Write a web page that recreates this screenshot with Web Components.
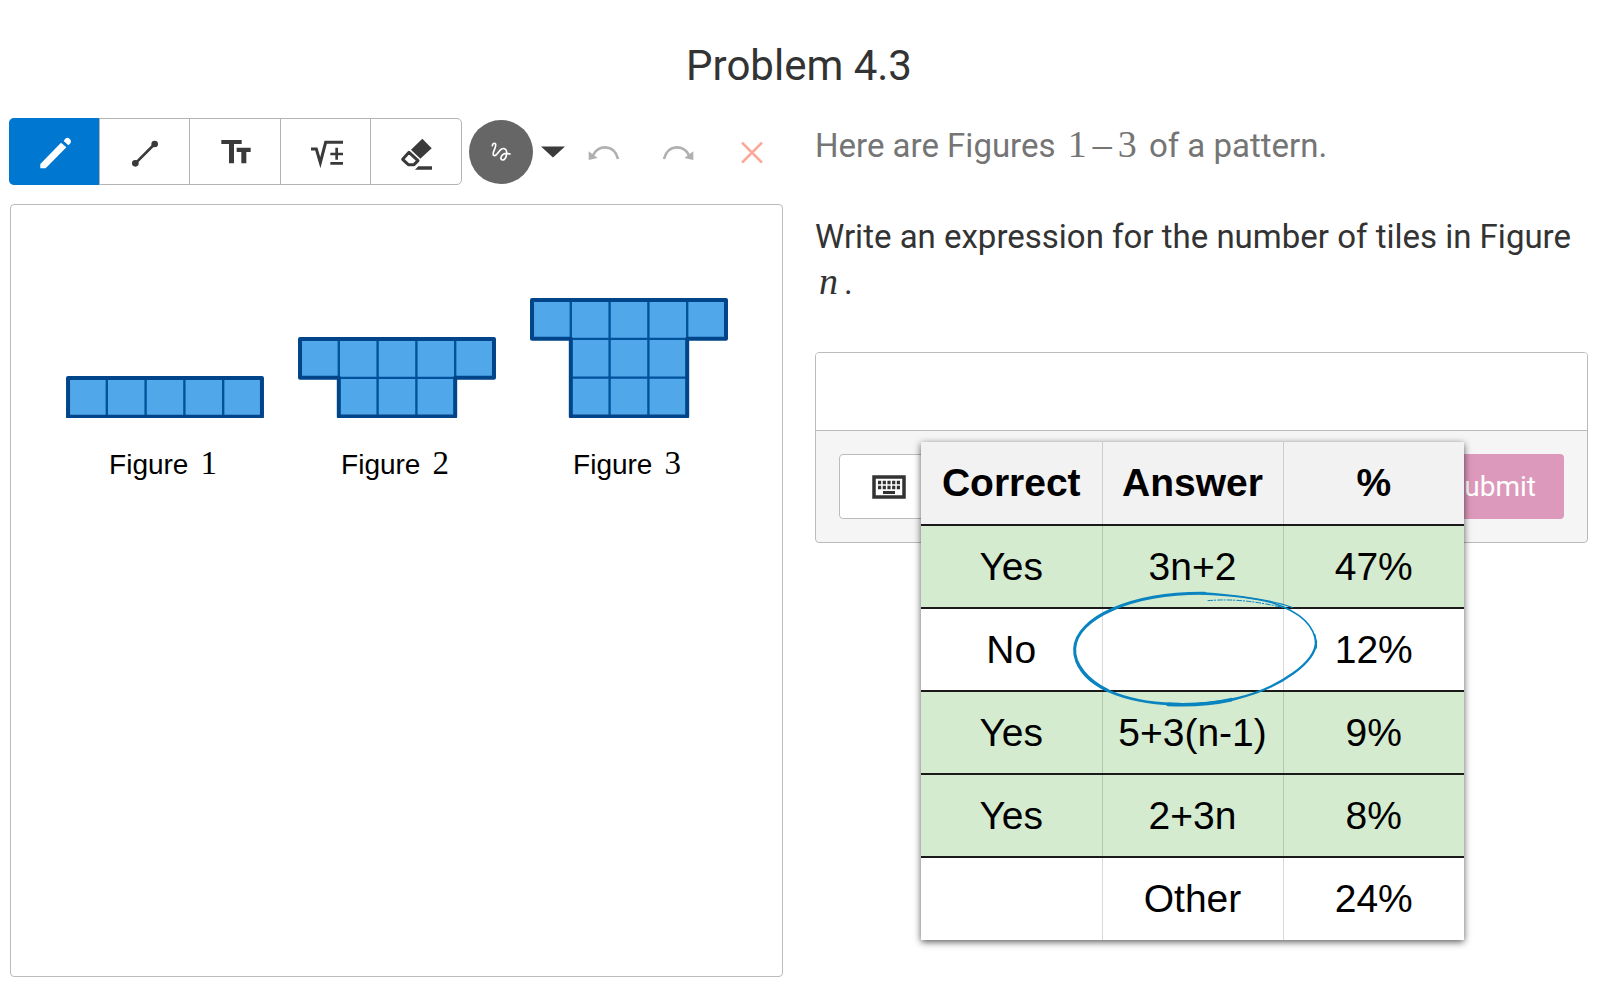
<!DOCTYPE html>
<html lang="en">
<head>
<meta charset="utf-8">
<title>Problem 4.3</title>
<style>
  body { margin: 0; background: #fff; color: #333; font-family: Roboto, "Liberation Sans", sans-serif; }
</style>
</head>
<body>
<problem-page>
  <span slot="title">Problem 4.3</span>
  <sketch-toolbar slot="work"></sketch-toolbar>
  <sketch-board slot="work">
    <tile-figure rows="1">1</tile-figure>
    <tile-figure rows="2">2</tile-figure>
    <tile-figure rows="3">3</tile-figure>
  </sketch-board>
  <problem-prompt slot="question"></problem-prompt>
  <answer-box slot="question">
    <answer-summary></answer-summary>
  </answer-box>
</problem-page>

<script>
const define = (name, html, setup) => {
  const template = document.createElement('template');
  template.innerHTML = html;
  customElements.define(name, class extends HTMLElement {
    constructor() {
      super();
      this.attachShadow({ mode: 'open' }).append(template.content.cloneNode(true));
    }
    connectedCallback() { if (setup) setup(this, this.shadowRoot); }
  });
};

define('problem-page', `
<style>
  :host { display: block; padding: 36px 12px 12px 10px; }
  h1 { margin: 0 0 22px; font-size: 42px; line-height: 60px; font-weight: 400; text-align: center; }
  main { display: grid; grid-template-columns: minmax(0, 1fr) minmax(0, 1fr); gap: 32px; align-items: start; }
</style>
<h1><slot name="title"></slot></h1>
<main>
  <section aria-label="Sketch"><slot name="work"></slot></section>
  <section aria-label="Question"><slot name="question"></slot></section>
</main>`);

define('sketch-toolbar', `
<style>
  :host { display: flex; align-items: center; height: 67px; margin: 0 0 19px -1px; color: #3a3a3a; }
  button { display: flex; align-items: center; justify-content: center; padding: 0; border: 0; background: none; color: inherit; cursor: pointer; }
  svg { display: block; width: 40px; height: 40px; fill: currentColor; }
  .stroke { fill: none; stroke: currentColor; }
  .tools { display: flex; box-sizing: border-box; width: 453px; height: 67px; border: 1px solid #b4b4b4; border-radius: 5px; }
  .tools button { flex: 1; }
  .tools button + button { border-left: 1px solid #b4b4b4; }
  .tools button[aria-pressed=true] { background: #0077d0; color: #fff; margin: -1px 0 -1px -1px; border-radius: 5px 0 0 5px; }
  .brush { width: 64px; height: 64px; margin-left: 7px; border-radius: 50%; background: #666; color: #fff; }
  .menu { width: 24px; margin: 0 8px; }
  .menu svg { width: 26px; height: 14px; }
  .actions { flex: 1; display: flex; justify-content: space-between; padding: 0 11px 0 11px; color: #b0b0b0; }
  .clear { color: #fca898; }
</style>
<div class="tools" role="group" aria-label="Tools">
  <button aria-label="Pencil" aria-pressed="true"><svg viewBox="-60 -60 120 120"><path d="M-41 49V36L21-28 37-14-25 49Z"/><path d="M29-33Q38-49 48-38 56-30 43-20Z"/></svg></button>
  <button aria-label="Line"><svg viewBox="-60 -60 120 120"><circle cx="-26" cy="34" r="10"/><circle cx="32" cy="-24" r="10"/><path class="stroke" stroke-width="8" d="M-26 34 32-24"/></svg></button>
  <button aria-label="Text"><svg viewBox="-60 -60 120 120"><path d="M-41-36H20V-24H-3V34H-18V-24H-41ZM5-13H47V0H34V34H19V0H5Z"/></svg></button>
  <button aria-label="Math"><svg viewBox="-60 -60 120 120"><path class="stroke" stroke-width="9" d="M-45-9H-29L-17 32-1-29H51"/><path class="stroke" stroke-width="8" d="M13 6H51M32-13V23M13 34H51"/></svg></button>
  <button aria-label="Eraser"><svg viewBox="-60 -60 120 120"><path d="M19-40 47-11 13 20-15-7Z"/><path class="stroke" stroke-width="9" stroke-linejoin="round" d="M-21 1 6 26-6 38H-23L-40 22Z"/><path d="M-3 53 7 43H48V53Z"/></svg></button>
</div>
<button class="brush" aria-label="Brush"><svg viewBox="-60 -60 120 120"><path class="stroke" stroke-width="5" stroke-linecap="round" d="M-26-19C-24-29-15-28-16-20-17-8-28 4-22 10-12 15-8-4 2-9 10-13 18-8 17 4 16 18 10 25 4 24-3 22-1 11 8 6 14 3 20 4 27 6"/></svg></button>
<button class="menu" aria-label="Brush options"><svg viewBox="0 0 26 14"><path d="M0 1H26L13 13Z"/></svg></button>
<div class="actions">
  <button aria-label="Undo"><svg viewBox="-60 -60 120 120"><path class="stroke" stroke-width="8" d="M-34 12C-20-22 30-26 42 21"/><path d="M-46-2-46 24-19 18Z"/></svg></button>
  <button aria-label="Redo"><svg viewBox="-60 -60 120 120"><path class="stroke" stroke-width="8" d="M34 12C20-22-30-26-42 21"/><path d="M46-2 46 24 19 18Z"/></svg></button>
  <button class="clear" aria-label="Clear"><svg viewBox="-60 -60 120 120"><path class="stroke" stroke-width="8" d="M-30-28 30 32M30-28-30 32"/></svg></button>
</div>`);

define('sketch-board', `
<style>
  :host { display: block; box-sizing: border-box; aspect-ratio: 1; border: 1px solid #bbb; border-radius: 4px; padding: 93px 54px 0 55px; }
  .row { display: flex; justify-content: space-between; align-items: flex-end; }
</style>
<div class="row"><slot></slot></div>`);

// A bar of five tiles on top of a stem that is three tiles wide.
define('tile-figure', `
<style>
  :host { display: block; width: 198px; }
  figure { margin: 0; }
  svg { display: block; width: 100%; }
  figcaption { margin: 25px 4px 0 0; display: flex; justify-content: center; align-items: baseline; gap: 12px; font: 28px/40px "Liberation Sans", sans-serif; color: #000; }
  .n { font: 33px/40px "Liberation Serif", serif; }
</style>
<figure><svg aria-hidden="true"></svg><figcaption>Figure <span class="n"><slot></slot></span></figcaption></figure>`,
(host, root) => {
  const rows = +host.getAttribute('rows'), t = 116, h = rows * t;
  const stem = rows > 1 ? `V${t}H${4 * t}V${h}H${t}V${t}H0Z` : `V${t}H0Z`;
  let grid = '';
  for (let i = 1; i < 5; i++) grid += `M${i * t} 0V${h}`;
  for (let j = 1; j < rows; j++) grid += `M${t} ${j * t}H${4 * t}`;
  const svg = root.querySelector('svg');
  svg.setAttribute('viewBox', `-6 -6 ${5 * t + 12} ${h + 12}`);
  svg.innerHTML = `<path d="M0 0H${5 * t}${stem}" fill="#50a7ea"/>
    <path d="${grid}" fill="none" stroke="#00529b" stroke-width="7"/>
    <path d="M0 0H${5 * t}${stem}" fill="none" stroke="#00458a" stroke-width="12" stroke-linejoin="round"/>`;
});

define('problem-prompt', `
<style>
  :host { display: block; font-size: 33px; line-height: 46px; padding: 5px 0 1px; }
  p { margin: 0 0 45px; color: #333; }
  .intro { color: #757575; }
  .math { font: 38px/38px "Liberation Serif", serif; margin: 0 4px; }
  .dash { margin: 0 6px; }
  .var { font-style: italic; margin: 0 6px 0 4px; }
</style>
<p class="intro">Here are Figures <span class="math">1<span class="dash">–</span>3</span> of a pattern.</p>
<p>Write an expression for the number of tiles in Figure <span class="math var">n</span>.</p>`);

define('answer-box', `
<style>
  :host { display: block; position: relative; }
  form { border: 1px solid #bbb; border-radius: 4px; overflow: hidden; background: #f5f5f5; }
  input { display: block; box-sizing: border-box; width: 100%; height: 78px; border: 0; border-bottom: 1px solid #bbb; padding: 0 24px; font: inherit; font-size: 33px; background: #fff; outline: 0; }
  .bar { display: flex; justify-content: space-between; padding: 23px; }
  button { height: 65px; border-radius: 4px; padding: 0 28px; font: 28px Roboto, sans-serif; }
  .keys { border: 1px solid #bbb; background: #fff; padding: 0 32px; color: #333; }
  .keys svg { display: block; width: 34px; height: 24px; }
  .submit { border: 0; background: #dd99bb; color: #fff; }
  slot { display: block; position: absolute; top: 90px; left: 106px; }
</style>
<form onsubmit="return false">
  <input aria-label="Your expression">
  <div class="bar">
    <button class="keys" type="button" aria-label="Keyboard"><svg viewBox="0 0 34 24"><rect x="2" y="2" width="30" height="20" fill="none" stroke="currentColor" stroke-width="3.5"/><path d="M6 7.5H28M6 12.5H28" stroke="currentColor" stroke-width="3.4" stroke-dasharray="3.2 1.5"/><path d="M11 17.5H23" stroke="currentColor" stroke-width="3"/></svg></button>
    <button class="submit">Submit</button>
  </div>
</form>
<slot></slot>`);

define('answer-summary', `
<style>
  :host { display: block; position: relative; width: 543px; background: #fff; color: #000; box-shadow: 0 2px 7px rgba(0,0,0,.65); }
  table { width: 100%; border-collapse: collapse; table-layout: fixed; font: 39px/44px "Liberation Sans", sans-serif; }
  th, td { box-sizing: border-box; height: 83px; padding: 0; text-align: center; vertical-align: middle; }
  th + th, td + td { border-left: 1px solid rgba(0,0,0,.15); }
  tbody tr { border-top: 2px solid #1a1a1a; }
  thead { background: #f2f2f2; }
  .yes { background: #d4ebcf; }
  svg { position: absolute; left: 147px; top: 146px; width: 250px; height: 120px; fill: none; stroke: #0a84c1; stroke-linecap: round; }
</style>
<table>
  <thead><tr><th scope="col">Correct</th><th scope="col">Answer</th><th scope="col">%</th></tr></thead>
  <tbody>
    <tr class="yes"><td>Yes</td><td>3n+2</td><td>47%</td></tr>
    <tr><td>No</td><td></td><td>12%</td></tr>
    <tr class="yes"><td>Yes</td><td>5+3(n-1)</td><td>9%</td></tr>
    <tr class="yes"><td>Yes</td><td>2+3n</td><td>8%</td></tr>
    <tr><td></td><td>Other</td><td>24%</td></tr>
  </tbody>
</table>
<svg viewBox="0 0 750 360" aria-hidden="true">
  <path stroke-width="9" d="M410 16C190 14 24 90 20 182 17 230 60 278 120 308"/>
  <path stroke-width="8" d="M26 220C60 310 200 349 345 349 400 349 450 344 500 333"/>
  <path stroke-width="11" d="M300 349C370 353 440 346 490 335"/>
  <path stroke-width="7" d="M500 333C640 300 745 220 744 160"/>
  <path stroke-width="5" d="M744 170C742 110 690 70 615 45 560 30 500 22 400 18"/>
  <path stroke-width="5" d="M744 180C747 170 742 150 740 140"/>
  <path stroke-width="4" d="M672 58C600 32 500 22 410 15"/>
  <path stroke-width="3" stroke-dasharray="14 5 4 6" d="M420 38C490 32 560 38 660 62"/>
</svg>`);
</script>
</body>
</html>
